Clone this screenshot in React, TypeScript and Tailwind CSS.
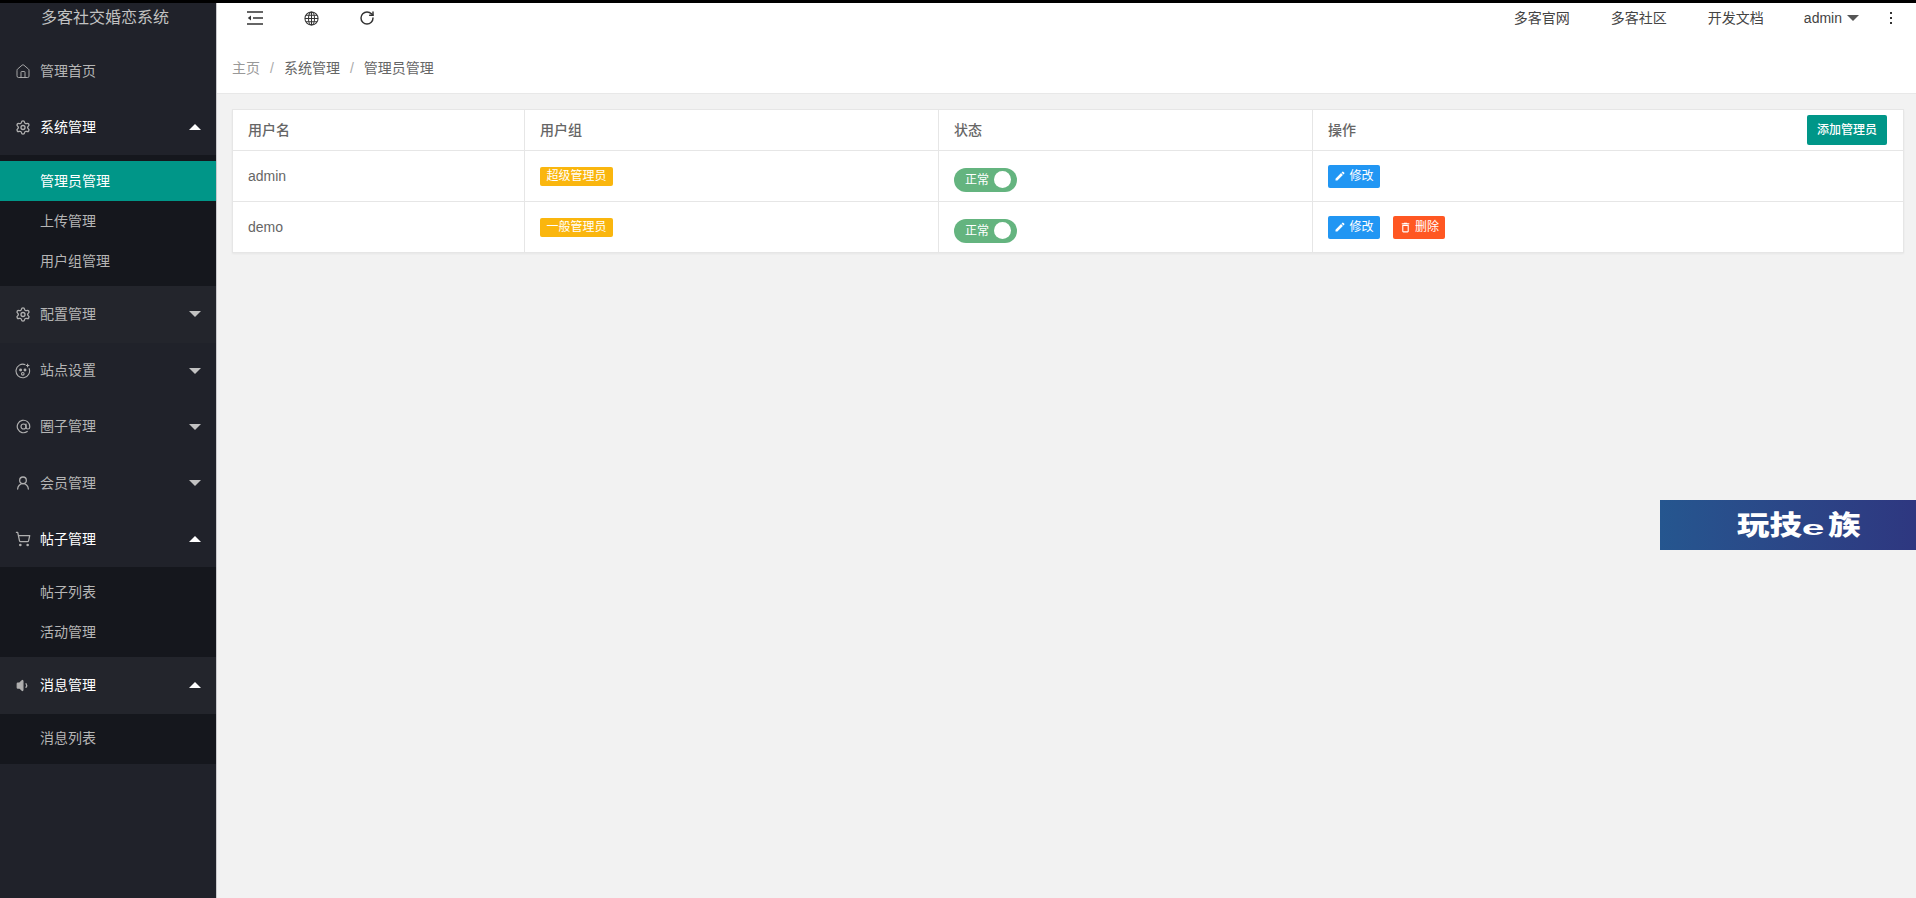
import type { ReactNode } from "react";
import { AtSign, Home, RotateCw, Settings, ShoppingCart, UserRound, Volume1 } from "lucide-react";
import { MdEdit, MdOutlineDelete } from "react-icons/md";

const font = "font-['Liberation_Sans','Noto_Sans_CJK_SC',sans-serif]";

// 站点设置 icon
const FaceIcon = () => (
  <svg width="16" height="16" viewBox="0 0 16 16" fill="none" stroke="currentColor" strokeWidth="1.1">
    <path d="M14 5.2A6.8 6.8 0 1 1 10.4 1.7" />
    <path d="M12.6 0.8v3.4M10.9 2.5h3.4" />
    <circle cx="5.6" cy="7" r="0.9" fill="currentColor" />
    <circle cx="10" cy="7" r="0.9" fill="currentColor" />
    <circle cx="7.8" cy="10.8" r="1.3" />
  </svg>
);

const ShrinkIcon = () => (
  <svg width="16" height="14" viewBox="0 0 16 14" fill="none" stroke="#333" strokeWidth="1.4">
    <path d="M0 1h16M6 7h10M0 13h16" />
    <path d="M4 4.5v5L0.8 7z" fill="#333" stroke="none" />
  </svg>
);

const WebsiteIcon = () => (
  <svg width="15" height="15" viewBox="0 0 16 16" fill="none" stroke="#333" strokeWidth="1.1">
    <circle cx="8" cy="8" r="7" />
    <ellipse cx="8" cy="8" rx="3.2" ry="7" />
    <path d="M8 1v14M1 8h14M2 4.6h12M2 11.4h12" />
  </svg>
);

const Caret = ({ up, className }: { up?: boolean; className?: string }) => (
  <svg width="12" height="6" viewBox="0 0 12 6" className={className}>
    <path d={up ? "M6 0l6 6H0z" : "M0 0h12L6 6z"} fill="currentColor" />
  </svg>
);

type NavItem = {
  name: string;
  icon: ReactNode;
  open?: boolean;
  arrow?: boolean;
  lighter?: boolean;
  subItems?: { name: string; active?: boolean }[];
};

const navItems: NavItem[] = [
  { name: "管理首页", icon: <Home size={17} strokeWidth={1.4} /> },
  {
    name: "系统管理",
    icon: <Settings size={17} strokeWidth={2} />,
    arrow: true,
    open: true,
    subItems: [{ name: "管理员管理", active: true }, { name: "上传管理" }, { name: "用户组管理" }],
  },
  { name: "配置管理", icon: <Settings size={17} strokeWidth={2} />, arrow: true, lighter: true },
  { name: "站点设置", icon: <FaceIcon />, arrow: true },
  { name: "圈子管理", icon: <AtSign size={15} strokeWidth={1.9} />, arrow: true },
  { name: "会员管理", icon: <UserRound size={16} strokeWidth={1.9} />, arrow: true },
  {
    name: "帖子管理",
    icon: <ShoppingCart size={16} strokeWidth={1.9} />,
    arrow: true,
    open: true,
    subItems: [{ name: "帖子列表" }, { name: "活动管理" }],
  },
  {
    name: "消息管理",
    icon: <Volume1 size={15} strokeWidth={2} fill="currentColor" />,
    arrow: true,
    open: true,
    lighter: true,
    subItems: [{ name: "消息列表" }],
  },
];

const Sidebar = () => (
  <aside className="w-[217px] shrink-0 bg-[#20222a] border-r border-[#c9c9cc]">
    <div className="h-[40px] pl-[41px] text-[16px] leading-[30px] text-[#c2c2c2]">多客社交婚恋系统</div>
    {navItems.map((nav) => (
      <div key={nav.name}>
        <div
          className={`h-[56.2px] flex items-center pl-[15px] pr-[15px] text-[14px] ${
            nav.open ? "text-white" : "text-[#b5b5b5]"
          } ${nav.lighter ? "bg-[#23252c]" : ""}`}
        >
          <span className="w-[16px] flex justify-center text-[#b0b0b0]">{nav.icon}</span>
          <span className="ml-[9px]">{nav.name}</span>
          {nav.arrow && <Caret up={nav.open} className={`ml-auto ${nav.open ? "text-white" : "text-[#c2c2c2]"}`} />}
        </div>
        {nav.subItems && (
          <div className={`pb-[5px] bg-[#15171d] ${nav.subItems.length === 3 ? "pt-[6px]" : "pt-[5px]"}`}>
            {nav.subItems.map((sub) => (
              <div
                key={sub.name}
                className={`h-[40px] pl-[40px] flex items-center text-[14px] ${
                  sub.active ? "bg-[#009688] text-white" : "text-[#b5b5b5]"
                }`}
              >
                {sub.name}
              </div>
            ))}
          </div>
        )}
      </div>
    ))}
  </aside>
);

const Topbar = () => (
  <header className="bg-white h-[91px] border-b border-[#e8e8e8]">
    <div className="h-[30px] flex items-center text-[14px] text-[#444]">
      <span className="ml-[30px] w-[16px] flex"><ShrinkIcon /></span>
      <span className="ml-[41px] flex"><WebsiteIcon /></span>
      <RotateCw size={16} strokeWidth={2.2} className="ml-[40px] text-[#333]" />
      <span className="ml-auto">多客官网</span>
      <span className="ml-[41px]">多客社区</span>
      <span className="ml-[41px]">开发文档</span>
      <span className="ml-[40px]">admin</span>
      <Caret className="ml-[5px] text-[#555]" />
      <span className="ml-[31px] mr-[24px] flex flex-col gap-[3px]">
        <i className="block w-[2px] h-[2px] bg-[#333]" />
        <i className="block w-[2px] h-[2px] bg-[#333]" />
        <i className="block w-[2px] h-[2px] bg-[#333]" />
      </span>
    </div>
    <div className="pl-[15px] mt-[20px] h-[30px] flex items-center text-[14px] text-[#666]">
      <span className="text-[#999]">主页</span>
      <span className="mx-[10px] text-[#aaa]">/</span>
      <span>系统管理</span>
      <span className="mx-[10px] text-[#aaa]">/</span>
      <span>管理员管理</span>
    </div>
  </header>
);

const Badge = ({ children }: { children: ReactNode }) => (
  <span className="inline-block w-[73px] h-[19px] leading-[19px] text-center rounded-[2px] bg-[#fab60e] text-[12px] text-white align-middle">
    {children}
  </span>
);

const Toggle = () => (
  <span className="mt-[7px] w-[63px] h-[24px] rounded-full bg-[#64b47f] flex items-center pl-[11px] pr-[6px] text-[12px] text-white justify-between">
    正常
    <i className="block w-[17px] h-[17px] rounded-full bg-white" />
  </span>
);

const ActionButton = ({ danger, children }: { danger?: boolean; children: ReactNode }) => (
  <button
    className={`w-[52px] h-[23px] rounded-[2px] flex items-center justify-center gap-[3px] text-[12px] text-white ${
      danger ? "bg-[#ff5722]" : "bg-[#2196f3]"
    }`}
  >
    {danger ? <MdOutlineDelete size={13} /> : <MdEdit size={12} />}
    {children}
  </button>
);

const users = [
  { name: "admin", group: "超级管理员", canDelete: false },
  { name: "demo", group: "一般管理员", canDelete: true },
];

const AdminTable = () => (
  <table className="w-[1671px] table-fixed bg-white border-collapse text-[14px] text-[#666] border border-[#e6e6e6] shadow-[0_1px_2px_rgba(0,0,0,0.05)]">
    <colgroup>
      <col className="w-[292px]" />
      <col className="w-[414px]" />
      <col className="w-[374px]" />
      <col className="w-[591px]" />
    </colgroup>
    <thead>
      <tr className="h-[41px] border-b border-[#e6e6e6] text-left">
        <th className="pl-[15px] font-medium">用户名</th>
        <th className="pl-[15px] font-medium border-l border-[#e6e6e6]">用户组</th>
        <th className="pl-[15px] font-medium border-l border-[#e6e6e6]">状态</th>
        <th className="pl-[15px] pr-[16px] font-medium border-l border-[#e6e6e6]">
          <div className="flex items-center justify-between">
            <span>操作</span>
            <button className="w-[80px] h-[30px] rounded-[2px] bg-[#009688] text-[12px] text-white">添加管理员</button>
          </div>
        </th>
      </tr>
    </thead>
    <tbody>
      {users.map((user) => (
        <tr key={user.name} className="h-[51px] border-b border-[#e6e6e6]">
          <td className="pl-[15px]">{user.name}</td>
          <td className="pl-[15px] border-l border-[#e6e6e6]">
            <Badge>{user.group}</Badge>
          </td>
          <td className="pl-[15px] border-l border-[#e6e6e6]">
            <Toggle />
          </td>
          <td className="pl-[15px] border-l border-[#e6e6e6]">
            <div className="flex gap-[13px]">
              <ActionButton>修改</ActionButton>
              {user.canDelete && <ActionButton danger>删除</ActionButton>}
            </div>
          </td>
        </tr>
      ))}
    </tbody>
  </table>
);

export default function App() {
  return (
    <div className={`${font} relative h-[898px] overflow-hidden bg-[#f2f2f2] border-t-[3px] border-black flex`}>
      <Sidebar />
      <main className="flex-1 min-w-0">
        <Topbar />
        <div className="pl-[15px] pt-[15px]">
          <AdminTable />
        </div>
      </main>
      {/* floating banner */}
      <div className="absolute right-0 top-[497px] w-[256px] h-[50px] pl-[77px] pt-[3px] flex items-center bg-gradient-to-r from-[#25568f] to-[#2e3780] text-white font-black">
        <span className="inline-block origin-left scale-x-[1.2] text-[27px] whitespace-nowrap">
          玩技
          <span className="inline-block w-[22px] origin-left scale-x-[1.7] text-[20px] leading-none">e</span>
          族
        </span>
      </div>
    </div>
  );
}
